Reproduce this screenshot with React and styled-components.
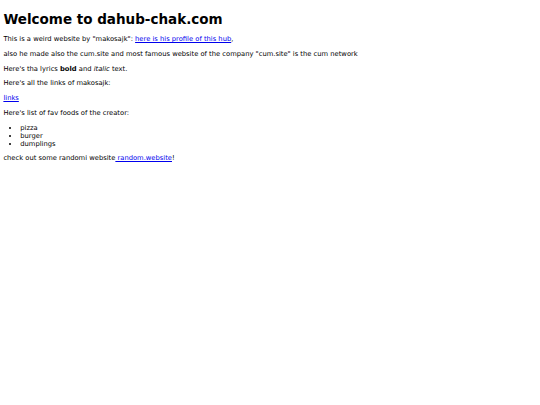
import React from "react";
import styled, { createGlobalStyle } from "styled-components";

const S = 0.421875;
const px = (v) => `${v * S}px`;

const Global = createGlobalStyle`
  html, body { margin: 0; padding: 0; background: #fff; }
  body {
    margin: 1.6px ${px(8)} ${px(8)};
    font-family: "DejaVu Sans", sans-serif;
    font-size: ${px(16)};
    color: #000;
  }
`;

const Title = styled.h1`
  font-size: ${px(32)};
  font-weight: bold;
  margin: ${px(21.44)} 0 ${px(20)};
`;

const Para = styled.p`
  margin: ${px(16)} 0;
`;

const Link = styled.a`
  color: #0000ee;
  text-decoration: underline;
`;

const List = styled.ul`
  margin: ${px(16)} 0;
  padding-left: ${px(40)};
  list-style: disc;
`;

export default function App() {
  return (
    <>
      <Global />
      <Title>Welcome to dahub-chak.com</Title>
      <Para>
        This is a weird website by "makosajk": <Link href="#">here is his profile of this hub</Link>,
      </Para>
      <Para>
        also he made also the cum.site and most famous website of the company "cum.site" is the cum network
      </Para>
      <Para>
        Here's tha lyrics <b>bold</b> and <i>italic</i> text.
      </Para>
      <Para>Here's all the links of makosajk:</Para>
      <Para>
        <Link href="#">links</Link>
      </Para>
      <Para>Here's list of fav foods of the creator:</Para>
      <List>
        <li>pizza</li>
        <li>burger</li>
        <li>dumplings</li>
      </List>
      <Para>
        check out some randomi website<Link href="#"> random.website</Link>!
      </Para>
    </>
  );
}
